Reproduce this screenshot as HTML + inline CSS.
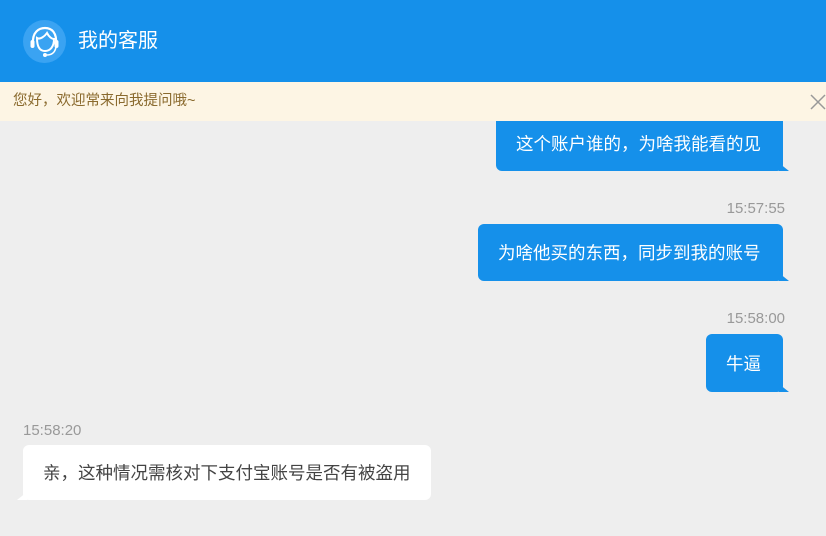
<!DOCTYPE html>
<html><head><meta charset="utf-8"><style>
*{margin:0;padding:0;box-sizing:border-box}
body{width:826px;height:536px;overflow:hidden;background:#eeeeee;font-family:"Liberation Sans","Noto Sans CJK SC",sans-serif;position:relative}
.hd{position:absolute;left:0;top:0;width:826px;height:82px;background:#1590ea}
.hd .t{position:absolute;left:78px;top:29px;color:#fff;font-size:20px;line-height:24px}
.nt{position:absolute;left:0;top:82px;width:826px;height:39px;background:#fdf5e4;color:#8a6a2e;font-size:14.5px;line-height:39px;padding-left:13px}
.b{position:absolute;height:auto;font-size:17.5px;color:#fff;background:#1590ea;border-radius:6px;padding:0 20px;display:flex;align-items:center;white-space:nowrap}
.b:after{content:"";position:absolute;right:-6px;bottom:0;border-left:10px solid #1590ea;border-top:8px solid transparent;}
.w{background:#fff;color:#444;border-radius:6px}
.w:after{left:-6px;right:auto;border-left:none;border-right:10px solid #fff;border-top:8px solid transparent}
.ts{position:absolute;font-size:15px;color:#999}
</style></head><body>
<div class="b" style="left:496px;top:110px;width:287px;height:61px;padding-top:5px">这个账户谁的，为啥我能看的见</div>
<div class="hd">
<svg style="position:absolute;left:23px;top:20px" width="43" height="43" viewBox="0 0 43 43">
<circle cx="21.5" cy="21.5" r="21.5" fill="#3aa3f2"/>
<path d="M10 24 C9 12 16 8 22 8 C29 8 34 13 33 24" fill="none" stroke="#fff" stroke-width="2.2"/>
<path d="M14 18 C17 20 22 16 24 13 C26 17 29 19 31 19 C31 27 27 31 22 31 C17 31 14 27 14 18Z" fill="none" stroke="#fff" stroke-width="2"/>
<rect x="7.5" y="20" width="4" height="8" rx="2" fill="#fff"/><rect x="31.5" y="20" width="4" height="8" rx="2" fill="#fff"/>
<path d="M33 27 C32 33 28 35 24 35" fill="none" stroke="#fff" stroke-width="1.6"/><circle cx="22" cy="35" r="2" fill="#fff"/>
</svg>
<div class="t">我的客服</div></div>
<div class="nt">您好，欢迎常来向我提问哦~</div>
<svg style="position:absolute;left:810px;top:94px" width="16" height="16"><path d="M1 1L15 15M15 1L1 15" stroke="#999" stroke-width="1.5"/></svg>
<div class="ts" style="right:41px;top:200px">15:57:55</div>
<div class="b" style="left:478px;top:224px;width:305px;height:57px">为啥他买的东西，同步到我的账号</div>
<div class="ts" style="right:41px;top:310px">15:58:00</div>
<div class="b" style="left:706px;top:334px;width:77px;height:58px">牛逼</div>
<div class="ts" style="left:23px;top:422px">15:58:20</div>
<div class="b w" style="left:23px;top:445px;width:408px;height:55px">亲，这种情况需核对下支付宝账号是否有被盗用</div>
</body></html>
